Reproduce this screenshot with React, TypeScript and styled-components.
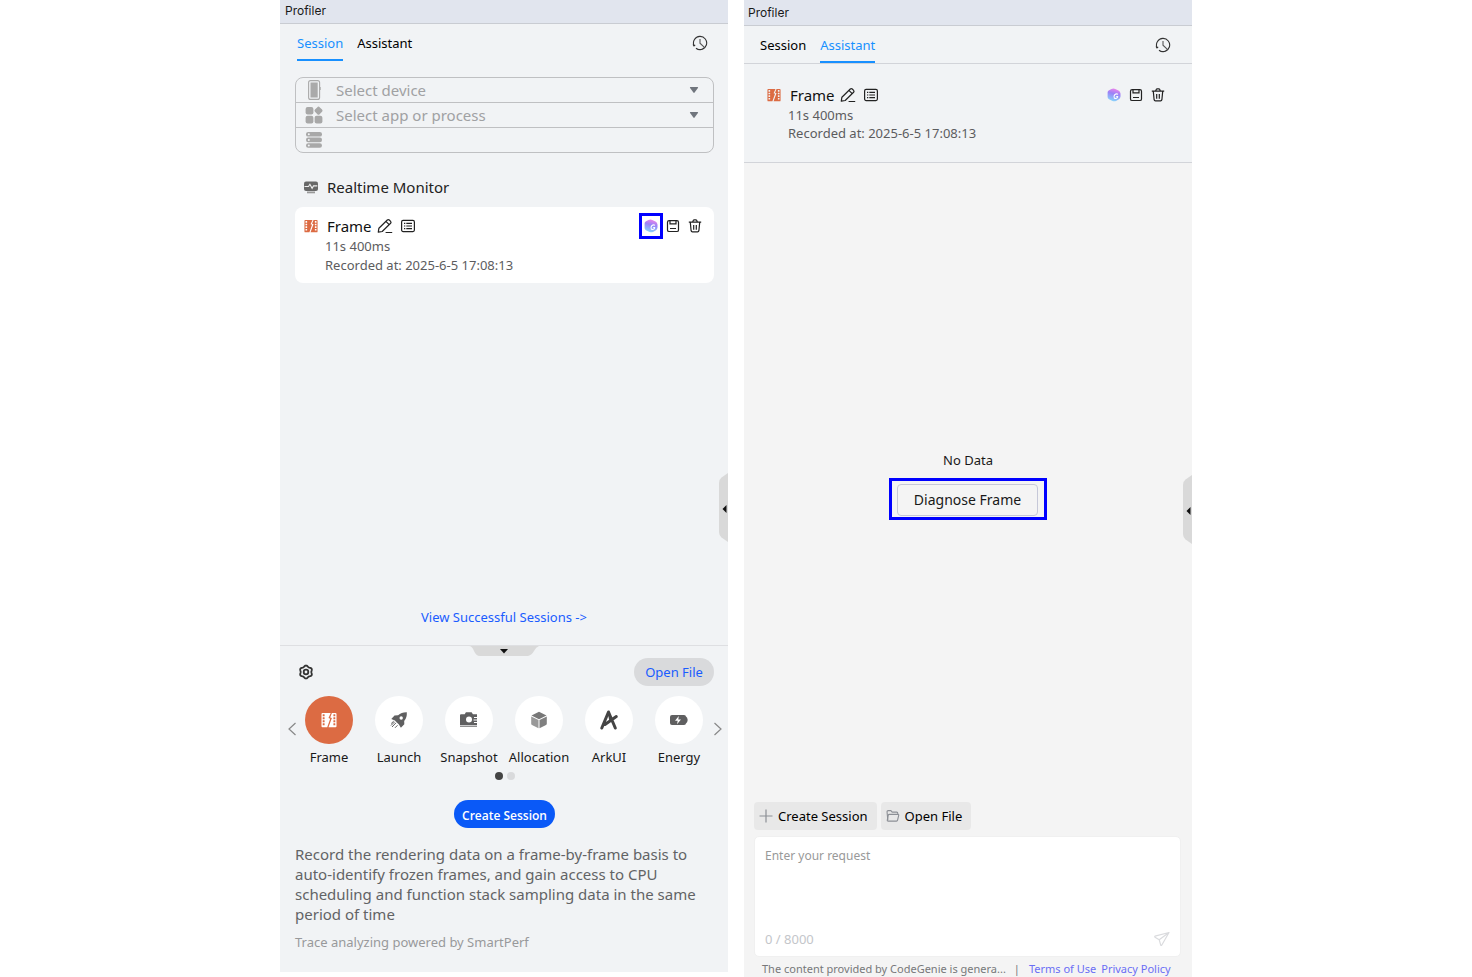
import React from "react";
import styled, { createGlobalStyle } from "styled-components";

const GlobalStyle = createGlobalStyle`
  *, *::before, *::after { box-sizing: border-box; }
  body { margin: 0; background: #fff; font-family: "Noto Sans", "Open Sans", sans-serif; font-size: 13px; line-height: 18px; color: #191919; }
  button, input, select, textarea { font: inherit; color: inherit; }
  button { padding: 0; border: 0; background: none; cursor: pointer; }
  a { text-decoration: none; }
  p, h1, h2, h3 { margin: 0; font-weight: 400; }
  svg { display: block; flex: none; }
`;

const Page = styled.main`
  display: grid;
  grid-template-columns: repeat(2, minmax(0, 448px));
  justify-content: center;
  gap: 16px;
  min-height: 100vh;
`;

const Panel = styled.section<{ $tone: string; $inset?: boolean }>`
  position: relative;
  display: flex;
  flex-direction: column;
  min-width: 0;
  margin-bottom: ${(p) => (p.$inset ? 5 : 0)}px;
  background: ${(p) => p.$tone};
`;

const TitleBar = styled.header<{ $tall?: boolean }>`
  height: ${(p) => (p.$tall ? 26 : 24)}px;
  padding: ${(p) => (p.$tall ? "4px 4px 0" : "2px 5px 0")};
  border-bottom: 1px solid #c9ccd2;
  background: #e1e5ee;
  font-family: Inter, sans-serif;
  font-size: 12px;
`;

const TabBar = styled.nav<{ $ruled?: boolean }>`
  display: flex;
  align-items: flex-start;
  gap: 14px;
  height: 38px;
  padding: 0 ${(p) => (p.$ruled ? 21 : 20)}px 0 ${(p) => (p.$ruled ? 16 : 17)}px;
  border-bottom: 1px solid ${(p) => (p.$ruled ? "#d2d4d9" : "transparent")};
  background: #f1f3f5;
`;

const Tab = styled.button<{ $active?: boolean }>`
  height: 37px;
  padding-top: 2px;
  border-bottom: 2px solid ${(p) => (p.$active ? "#1890ff" : "transparent")};
  color: ${(p) => (p.$active ? "#1890ff" : "#000")};
`;

const HistoryButton = styled.button`
  margin: 11px 0 0 auto;
`;

const TargetBox = styled.div`
  margin: 15px 14px 0 15px;
  border: 1px solid #bfc0c2;
  border-radius: 8px;
`;

const TargetRow = styled.label`
  display: flex;
  align-items: center;
  gap: 12px;
  height: 24px;
  padding: 0 14px 0 8px;
  color: #7a7f87;
  & + & {
    height: 25px;
    border-top: 1px solid #bfc0c2;
  }
`;

const TargetSelect = styled.select`
  flex: 1;
  height: 24px;
  padding: 0;
  border: 0;
  background: none;
  appearance: none;
  color: #a0a1a3;
  font-size: 15px;
`;

const MonitorTitle = styled.h2`
  display: flex;
  align-items: center;
  gap: 8px;
  margin: 23px 0 9px;
  padding-left: 23px;
  font-size: 15px;
  line-height: 22px;
  color: #222;
`;

const SessionCard = styled.article<{ $boxed?: boolean }>`
  margin: ${(p) => (p.$boxed ? "0 14px 0 15px" : "0")};
  padding: ${(p) => (p.$boxed ? "8px 8px 8px 9px" : "20px 23px")};
  border-radius: ${(p) => (p.$boxed ? 8 : 0)}px;
  border-bottom: ${(p) => (p.$boxed ? "0" : "1px solid #d2d4d9")};
  background: ${(p) => (p.$boxed ? "#fff" : "#f1f3f5")};
  line-height: ${(p) => (p.$boxed ? 19 : 18)}px;
`;

const CardHead = styled.div`
  display: flex;
  align-items: center;
  height: 22px;
`;

const CardName = styled.h3`
  margin: 0 5px 0 9px;
  font-size: 15px;
  line-height: 20px;
  color: #111;
`;

const IconGroup = styled.div<{ $end?: boolean }>`
  display: flex;
  align-items: center;
  gap: ${(p) => (p.$end ? 0 : 7)}px;
  margin-left: ${(p) => (p.$end ? "auto" : "0")};
`;

const IconButton = styled.button<{ $wide?: boolean }>`
  display: flex;
  align-items: center;
  justify-content: center;
  width: ${(p) => (p.$wide ? 22 : 16)}px;
  height: 22px;
  color: #222;
`;

const MarkedSlot = styled.div<{ $marked?: boolean }>`
  display: flex;
  padding: 1px 0;
  outline: ${(p) => (p.$marked ? "3px solid #0000ff" : "none")};
  outline-offset: -2px;
`;

const CardMeta = styled.p`
  padding-left: 21px;
  color: #5c5c5e;
`;

const ViewLink = styled.a`
  margin: auto auto 19px;
  color: #1a5cff;
`;

const Launcher = styled.section`
  position: relative;
  padding: 12px 14px 21px 15px;
  border-top: 1px solid #dedfe2;
`;

const PullDown = styled.button`
  position: absolute;
  top: 0;
  left: 50%;
  margin-left: -35px;
`;

const SideHandle = styled.button<{ $low?: boolean }>`
  position: absolute;
  right: 0;
  top: ${(p) => (p.$low ? 475 : 473)}px;
`;

const LauncherTop = styled.div`
  display: flex;
  align-items: center;
  justify-content: space-between;
  padding-left: 3px;
`;

const OpenPill = styled.button`
  width: 80px;
  height: 28px;
  border-radius: 14px;
  background: #d9dadc;
  color: #1a5cff;
`;

const Carousel = styled.div`
  display: flex;
  align-items: center;
  margin: 10px -9px 0 -8px;
`;

const Arrow = styled.button`
  width: 10px;
  flex: none;
  margin-top: -4px;
`;

const KindList = styled.div`
  display: grid;
  grid-template-columns: repeat(6, minmax(0, 1fr));
  flex: 1;
  margin: 0 -1px 0 -3px;
`;

const Kind = styled.button`
  display: flex;
  flex-direction: column;
  align-items: center;
  gap: 4px;
  white-space: nowrap;
`;

const KindDisc = styled.span<{ $active?: boolean }>`
  display: flex;
  align-items: center;
  justify-content: center;
  width: 48px;
  height: 48px;
  border-radius: 50%;
  background: ${(p) => (p.$active ? "#dc6b43" : "#fff")};
  color: ${(p) => (p.$active ? "#fff" : "#5f5f60")};
`;

const Dots = styled.div`
  display: flex;
  justify-content: center;
  gap: 4px;
  margin-top: 6px;
`;

const Dot = styled.span<{ $active?: boolean }>`
  width: 8px;
  height: 8px;
  border-radius: 50%;
  background: ${(p) => (p.$active ? "#444" : "#d9dadc")};
`;

const CreateButton = styled.button`
  display: block;
  height: 28px;
  margin: 20px auto 16px;
  padding: 3px 8px 0;
  border-radius: 14px;
  background: #0a59f7;
  color: #fff;
  font-family: "Open Sans", sans-serif;
  font-size: 12px;
  font-weight: 600;
`;

const Description = styled.p`
  font-size: 15px;
  line-height: 20px;
  color: #626365;
`;

const Powered = styled.p`
  margin-top: 9px;
  color: #98999b;
`;

const Empty = styled.div`
  flex: 1;
  display: flex;
  flex-direction: column;
  align-items: center;
  justify-content: center;
  gap: 9px;
  padding-top: 6px;
`;

const DiagnoseMark = styled.div`
  padding: 3px 6px 1px 5px;
  border: 3px solid #0000ff;
`;

const DiagnoseButton = styled.button`
  height: 32px;
  padding: 0 16px;
  border: 1px solid #c6c8d8;
  border-radius: 4px;
  font-size: 14px;
`;

const Composer = styled.section`
  padding: 0 11px 0 10px;
`;

const Actions = styled.div`
  display: flex;
  gap: 4px;
  margin-bottom: 6px;
`;

const Action = styled.button`
  display: flex;
  align-items: center;
  gap: 5px;
  height: 28px;
  padding: 0 9px 0 5px;
  border-radius: 4px;
  background: #e8e8e8;
  color: #000;
`;

const Prompt = styled.div`
  height: 121px;
  display: flex;
  flex-direction: column;
  padding: 10px 10px 8px;
  border: 1px solid #f0f0f0;
  border-radius: 5px;
  background: #fff;
`;

const PromptInput = styled.textarea`
  flex: 1;
  padding: 0;
  border: 0;
  outline: 0;
  resize: none;
  background: none;
  font-size: 12px;
  &::placeholder { color: #999; opacity: 1; }
`;

const PromptFoot = styled.div`
  display: flex;
  align-items: center;
  justify-content: space-between;
  color: #c4c6ca;
`;

const Legal = styled.footer`
  display: flex;
  gap: 5px;
  height: 20px;
  padding: 4px 0 0 8px;
  font-size: 11px;
  line-height: 16px;
  color: #77787a;
  white-space: nowrap;
  a { color: #6a6ef5; }
`;

const LegalBar = styled.span`
  padding: 0 4px 0 3px;
`;

const HistoryIcon = () => (
  <svg width="16" height="16" viewBox="0 0 16 16" fill="none" stroke="#333" strokeWidth="1.1">
    <path d="M2 10.6A6.600 6.600 0 1 1 4 13.200M5.200 14A6.600 6.600 0 0 0 12.600 12.800" />
    <path d="M1 9.500l1 1.400 1.200-1" />
    <path d="M8 4v4.200l4.400 4.200" stroke="#555" />
  </svg>
);

const PhoneIcon = () => (
  <svg width="20" height="20" viewBox="0 0 20 20">
    <rect x="4.6" y=".6" width="11" height="18.8" rx="2" fill="none" stroke="#aaa" strokeWidth="1.1" />
    <rect x="6.5" y="2.5" width="7.2" height="15" fill="#aaa" />
    <path d="M16.2 7v3" stroke="#aaa" />
  </svg>
);

const AppsIcon = () => (
  <svg width="20" height="20" viewBox="0 0 20 20" fill="#a8a8a8">
    <rect x="1.600" y="2" width="7.800" height="7.600" rx="2" />
    <rect x="1.600" y="10.800" width="7.800" height="7.600" rx="2" />
    <rect x="10.600" y="10.800" width="7.800" height="7.600" rx="2" />
    <rect x="11.200" y="2.400" width="6.600" height="6.600" rx="1.600" transform="rotate(45 14.500 5.700)" />
  </svg>
);

const ServerIcon = () => (
  <svg width="20" height="20" viewBox="0 0 20 20">
    {[2, 7.6, 13.2].map((y) => (
      <g key={y}>
        <rect x="2" y={y} width="16" height="4.6" rx="2.2" fill="#a8a8a8" />
        <circle cx="4.8" cy={y + 2.3} r="1" fill="#f1f3f5" />
      </g>
    ))}
  </svg>
);

const Caret = () => (
  <svg width="10" height="6" viewBox="0 0 10 6" fill="#70757d"><path d="M1.500 0h7q1 0 .4.900L5.600 5.600q-.6.600-1.200 0L1.100.900Q.500 0 1.500 0z" /></svg>
);

const MonitorIcon = () => (
  <svg width="16" height="16" viewBox="0 0 16 16">
    <rect x="1" y="2.4" width="14" height="9.6" rx="2" fill="#686868" />
    <path d="M4 13.400h8" stroke="#999" strokeWidth="1.800" />
    <path d="M1.500 7.500h4l1.400-2.200 2.200 4 1.400-2.400h3.800" fill="none" stroke="#eee" strokeWidth="1.1" />
  </svg>
);

const FilmIcon = ({ size = 16, color = "#dc6b43", hole = "#fff" }) => (
  <svg width={size} height={size} viewBox="0 0 16 16">
    <path d="M1.500 1h8.200L7.500 6l1.700.7L6.200 15.200H1.500a1 1 0 0 1-1-1V2a1 1 0 0 1 1-1z" fill={color} />
    <path d="M10.900 1h3.600a1 1 0 0 1 1 1v12.200a1 1 0 0 1-1 1h-7l3.400-9.100-1.700-.7z" fill={color} />
    <g fill={hole}>
      {[2.3, 5.3, 8.3, 11.3].map((y) => (
        <React.Fragment key={y}>
          <rect x="1.700" y={y} width="1.900" height="1.900" rx=".3" />
          <rect x="12.400" y={y} width="1.900" height="1.900" rx=".3" />
        </React.Fragment>
      ))}
    </g>
  </svg>
);

const EditIcon = () => (
  <svg width="16" height="16" viewBox="0 0 16 16" fill="none" stroke="#222" strokeWidth="1.2" strokeLinejoin="round">
    <path d="M1.300 14.200l.6-4L10.300 2q1-.9 2 0l1.300 1.300q.9 1 0 2L5.200 13.500z" />
    <path d="M8.900 3.400l3.300 3.300M8.600 14.500h6.600" />
  </svg>
);

const ListIcon = () => (
  <svg width="16" height="16" viewBox="0 0 16 16" fill="none" stroke="#222" strokeWidth="1.2">
    <rect x="1.600" y="2.400" width="12.800" height="11.200" rx="1.500" />
    <path d="M4 5.400h1.300M6.300 5.400H12M4 8h1.300M6.300 8H12M4 10.600h1.300M6.300 10.600H12" />
  </svg>
);

const GenieIcon = ({ id }: { id: string }) => (
  <svg width="14" height="14" viewBox="0 0 14 14">
    <defs>
      <linearGradient id={id} x1=".6" y1="0" x2=".35" y2="1">
        <stop offset="0" stopColor="#ee83ea" />
        <stop offset=".4" stopColor="#9a83f7" />
        <stop offset="1" stopColor="#88d8fb" />
      </linearGradient>
    </defs>
    <path d="M4.500.900q2-.7 3.800 0l3.200 1.600q1.800 1 2 3v3q-.1 2-1.900 3.100L9 13q-1.800.7-3.500 0L2 11.200Q.600 10.400.600 9V4.400Q.500 3 2 2.200z" fill={`url(#${id})`} />
    <path d="M11 6.400Q9.400 5.300 7.800 6.700 6.300 8.500 7.300 10q1.600 1.200 3-.3l.3-1.200H9.200" fill="none" stroke="#fff" strokeWidth="1.1" />
  </svg>
);

const SaveIcon = () => (
  <svg width="14" height="14" viewBox="0 0 14 14" fill="none" stroke="#222" strokeWidth="1.2">
    <rect x="1.500" y="1.700" width="11" height="10.800" rx="1.600" />
    <path d="M4 1.700v3.100h6V1.700M4 9.500h6" />
  </svg>
);

const TrashIcon = () => (
  <svg width="14" height="14" viewBox="0 0 14 14" fill="none" stroke="#222" strokeWidth="1.2">
    <path d="M.8 3.200h12.400M4.600 3l.8-1.700q.2-.4.700-.4h1.800q.5 0 .7.4L9.400 3M2.300 3.400l.8 8.300q.2 1.100 1.300 1.100h5.200q1.100 0 1.300-1.100l.8-8.300M5.700 6v4.800M8.300 6v4.800" />
  </svg>
);

const gearOutline = Array.from({ length: 48 }, (_, i) => {
  const angle = (i / 48) * Math.PI * 2;
  const radius = 5.9 + 0.6 * Math.cos(6 * (angle - Math.PI / 6));
  return `${(8 + radius * Math.cos(angle)).toFixed(2)},${(8 + radius * Math.sin(angle)).toFixed(2)}`;
}).join(" ");

const GearIcon = () => (
  <svg width="16" height="16" viewBox="0 0 16 16" fill="none" stroke="#333" strokeWidth="1.8" strokeLinejoin="round">
    <polygon points={gearOutline} />
    <circle cx="8" cy="8" r="2.300" />
  </svg>
);

const RocketIcon = () => (
  <svg width="18" height="18" viewBox="0 0 18 18">
    <path d="M16.800 1.200q.4 5.300-2.600 8.800l.1 3.200-3.400 3.600-2-3.200-4-4.200L1.300 8l3.200-3.600 3.600-.2Q11.600 1 16.800 1.200z" fill="currentColor" />
    <circle cx="11.200" cy="7" r="1.700" fill="#fff" />
    <path d="M1.200 12.500l2.500-2.300M2 16l4-4.200M5 16.800l2.500-2.500M1 14.500l3.700-3.700" stroke="currentColor" />
  </svg>
);

const CameraIcon = () => (
  <svg width="20" height="18" viewBox="0 0 20 18">
    <path d="M1 4.300q0-1 1-1h3.700l1.200-2h5.700l1.300 2H18v10.600H1z" fill="currentColor" />
    <path d="M1 15.200h17" stroke="currentColor" />
    <circle cx="10" cy="8.500" r="3" fill="#fff" />
    <path d="M15 6.500h4M14.500 9h4.500M15 11.500h4" stroke="#fff" strokeWidth="1.1" />
  </svg>
);

const CubeIcon = () => (
  <svg width="18" height="18" viewBox="0 0 18 18">
    <path d="M9 .8l7.500 3.600L9 8.200 1.500 4.400z" fill="#777" />
    <path d="M1.200 5.400l7.300 3.700v8.200l-6.500-3.400q-.8-.4-.8-1.200z" fill="#999" />
    <path d="M16.800 5.400L9.500 9.100v8.200l6.500-3.400q.8-.4.800-1.200z" fill="#808080" />
  </svg>
);

const ArkIcon = () => (
  <svg width="20" height="22" viewBox="0 0 20 22" fill="none" stroke="#444" strokeWidth="3" strokeLinecap="round" strokeLinejoin="round">
    <path d="M2.800 19L9.500 3l6.800 16M6 15.500L17.300 7.600" />
    <path d="M9.500 4l1.500 7" strokeWidth="1.6" />
  </svg>
);

const BatteryIcon = () => (
  <svg width="20" height="18" viewBox="0 0 20 18">
    <rect x="1" y="4" width="16" height="10" rx="2" fill="currentColor" />
    <path d="M16.500 5q2.200 1.500 2.200 4t-2.200 4z" fill="currentColor" />
    <path d="M9.800 5L6 9.800h2.700L8 13.200 12 8.500H9.300z" fill="#fff" />
  </svg>
);

const Chevron = ({ right }: { right?: boolean }) => (
  <svg width="10" height="14" viewBox="0 0 10 14" fill="none" stroke="#888" strokeWidth="1.2">
    <path d={right ? "M1.500 1l6.500 6-6.500 6" : "M8.500 1L2 7l6.500 6"} />
  </svg>
);

const PlusIcon = () => (
  <svg width="14" height="14" viewBox="0 0 14 14" stroke="#8c8f95" strokeWidth="1.2"><path d="M7 .5v13M.5 7h13" /></svg>
);

const FolderIcon = () => (
  <svg width="14" height="14" viewBox="0 0 15 14" fill="none" stroke="#8c8f95" strokeWidth="1.2" strokeLinejoin="round">
    <path d="M2 11.500L1.100 2.500q0-1.200 1.200-1.200h3l1.300 1.500h4.800q1.200 0 1.200 1.200v1" />
    <path d="M2.300 12.500q-1 0-.9-1l1-5.300q.2-1 1.200-1h9q1.300 0 1 1.200l-1.200 5.100q-.2 1-1.200 1z" />
  </svg>
);

const SendIcon = () => (
  <svg width="16" height="16" viewBox="0 0 16 16" fill="none" stroke="#dadbde" strokeWidth="1.2" strokeLinejoin="round">
    <path d="M15 1.500L1 5.200q-.5.500 0 1l4.200 2.500 1.500 5.500q.5.600 1 0zM5.200 8.700L15 1.500" />
  </svg>
);

const HandleShape = () => (
  <svg width="9" height="69" viewBox="0 0 9 69">
    <path d="M9 0v69L2.500 64.500Q0 62.500 0 59V10q0-3.500 2.500-5.500z" fill="#d9d9d9" />
    <path d="M7.500 32v8L3.500 36z" fill="#111" />
  </svg>
);

const kinds = [
  { name: "Frame", icon: <FilmIcon size={16} color="#fff" hole="#dc6b43" /> },
  { name: "Launch", icon: <RocketIcon /> },
  { name: "Snapshot", icon: <CameraIcon /> },
  { name: "Allocation", icon: <CubeIcon /> },
  { name: "ArkUI", icon: <ArkIcon /> },
  { name: "Energy", icon: <BatteryIcon /> },
];

function Tabs({ active, ruled }: { active: string; ruled?: boolean }) {
  return (
    <TabBar $ruled={ruled}>
      {["Session", "Assistant"].map((name) => (
        <Tab key={name} $active={name === active}>{name}</Tab>
      ))}
      <HistoryButton aria-label="History"><HistoryIcon /></HistoryButton>
    </TabBar>
  );
}

function FrameSession({ boxed }: { boxed?: boolean }) {
  return (
    <SessionCard $boxed={boxed}>
      <CardHead>
        <FilmIcon hole={boxed ? "#fff" : "#f1f3f5"} size={14} />
        <CardName>Frame</CardName>
        <IconGroup>
          <IconButton aria-label="Rename"><EditIcon /></IconButton>
          <IconButton aria-label="Details"><ListIcon /></IconButton>
        </IconGroup>
        <IconGroup $end>
          <MarkedSlot $marked={boxed}>
            <IconButton $wide aria-label="Diagnose"><GenieIcon id={boxed ? "genie-a" : "genie-b"} /></IconButton>
          </MarkedSlot>
          <IconButton $wide aria-label="Save"><SaveIcon /></IconButton>
          <IconButton $wide aria-label="Delete"><TrashIcon /></IconButton>
        </IconGroup>
      </CardHead>
      <CardMeta>11s 400ms</CardMeta>
      <CardMeta>Recorded at: 2025-6-5 17:08:13</CardMeta>
    </SessionCard>
  );
}

export default function App() {
  return (
    <>
      <GlobalStyle />
      <Page>
        <Panel $tone="#f1f3f5" $inset>
          <TitleBar>Profiler</TitleBar>
          <Tabs active="Session" />
          <TargetBox>
            <TargetRow>
              <PhoneIcon />
              <TargetSelect aria-label="Device"><option>Select device</option></TargetSelect>
              <Caret />
            </TargetRow>
            <TargetRow>
              <AppsIcon />
              <TargetSelect aria-label="App or process"><option>Select app or process</option></TargetSelect>
              <Caret />
            </TargetRow>
            <TargetRow as="div"><ServerIcon /></TargetRow>
          </TargetBox>
          <MonitorTitle><MonitorIcon />Realtime Monitor</MonitorTitle>
          <FrameSession boxed />
          <ViewLink href="#sessions">View Successful Sessions -&gt;</ViewLink>
          <Launcher>
            <PullDown aria-label="Collapse">
              <svg width="70" height="10" viewBox="0 0 70 10">
                <path d="M0 0h70q-3 1-5 5t-6 5H11Q7 10 5 5T0 0z" fill="#d9d9d9" />
                <path d="M31 3h8l-4 4.500z" fill="#111" />
              </svg>
            </PullDown>
            <LauncherTop>
              <button aria-label="Settings"><GearIcon /></button>
              <OpenPill>Open File</OpenPill>
            </LauncherTop>
            <Carousel>
              <Arrow aria-label="Previous"><Chevron /></Arrow>
              <KindList>
                {kinds.map((kind, i) => (
                  <Kind key={kind.name}>
                    <KindDisc $active={i === 0}>{kind.icon}</KindDisc>
                    {kind.name}
                  </Kind>
                ))}
              </KindList>
              <Arrow aria-label="Next"><Chevron right /></Arrow>
            </Carousel>
            <Dots><Dot $active /><Dot /></Dots>
            <CreateButton>Create Session</CreateButton>
            <Description>
              Record the rendering data on a frame-by-frame basis to auto-identify frozen frames, and gain access to CPU scheduling and function stack sampling data in the same period of time
            </Description>
            <Powered>Trace analyzing powered by SmartPerf</Powered>
          </Launcher>
          <SideHandle aria-label="Expand"><HandleShape /></SideHandle>
        </Panel>
        <Panel $tone="#f4f4f4">
          <TitleBar $tall>Profiler</TitleBar>
          <Tabs active="Assistant" ruled />
          <FrameSession />
          <Empty>
            <p>No Data</p>
            <DiagnoseMark><DiagnoseButton>Diagnose Frame</DiagnoseButton></DiagnoseMark>
          </Empty>
          <Composer>
            <Actions>
              <Action><PlusIcon />Create Session</Action>
              <Action><FolderIcon />Open File</Action>
            </Actions>
            <Prompt>
              <PromptInput aria-label="Request" placeholder="Enter your request" />
              <PromptFoot>
                0 / 8000
                <button aria-label="Send"><SendIcon /></button>
              </PromptFoot>
            </Prompt>
            <Legal>
              <span>The content provided by CodeGenie is genera...</span>
              <LegalBar>|</LegalBar>
              <a href="#terms">Terms of Use</a>
              <a href="#privacy">Privacy Policy</a>
            </Legal>
          </Composer>
          <SideHandle $low aria-label="Expand"><HandleShape /></SideHandle>
        </Panel>
      </Page>
    </>
  );
}
